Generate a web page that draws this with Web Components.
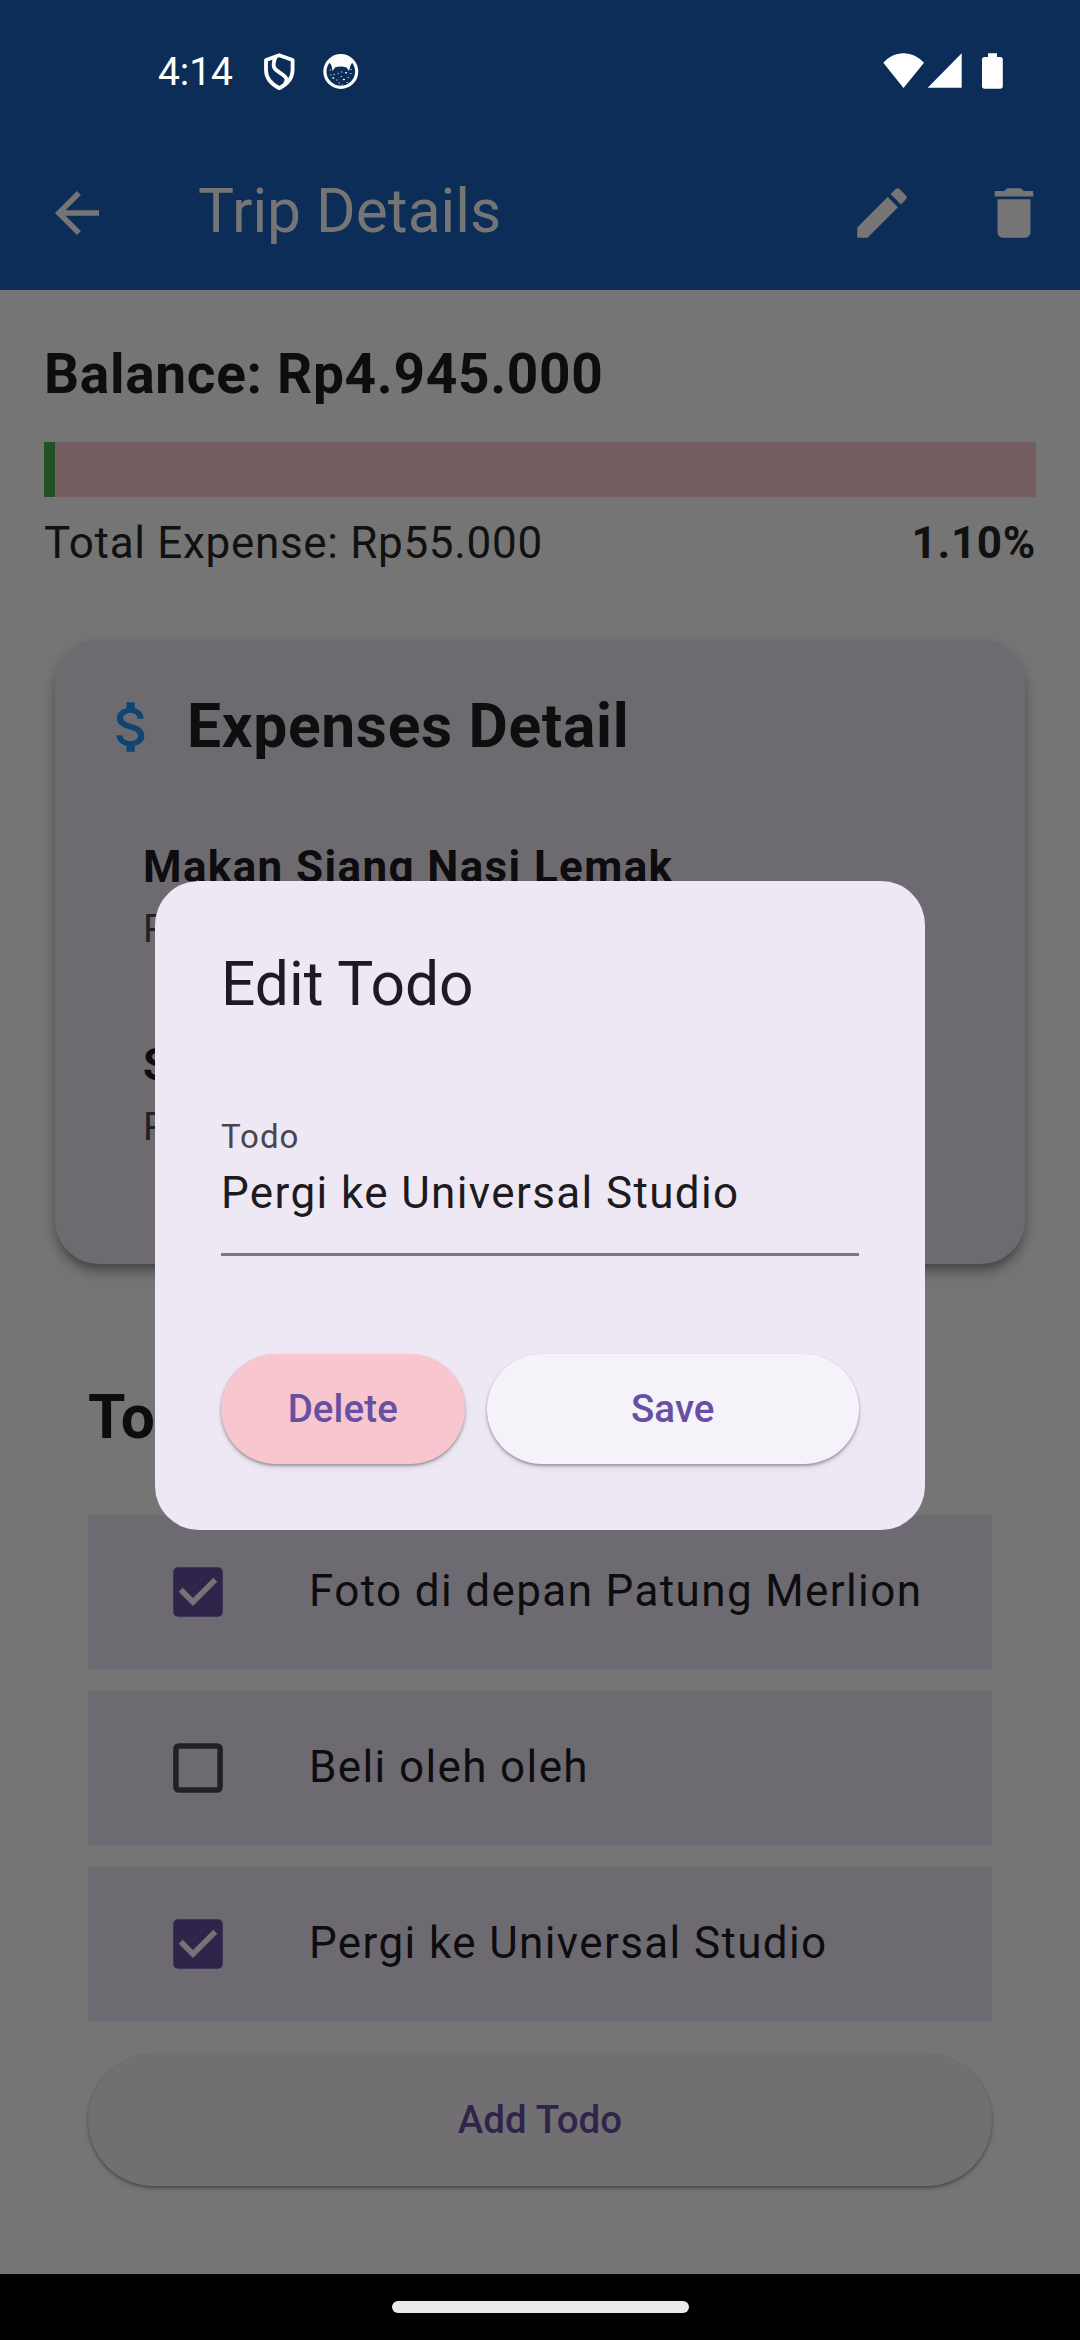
<!DOCTYPE html>
<html lang="id">
<head>
<meta charset="utf-8">
<title>Trip Details</title>
<style>
  html, body { margin: 0; background: #000; }
  body { font-family: Roboto, "Noto Sans", sans-serif; }
</style>
</head>
<body>
<trip-app></trip-app>
<script>
const define = (name, html) => {
  const tpl = document.createElement('template');
  tpl.innerHTML = html;
  customElements.define(name, class extends HTMLElement {
    constructor() {
      super();
      this.attachShadow({ mode: 'open' }).append(tpl.content.cloneNode(true));
    }
  });
};

// Material icons on the 24-unit grid, drawn at 66px.
const ICONS = {
  back: 'M20 11H7.83l5.59-5.59L12 4l-8 8 8 8 1.41-1.41L7.83 13H20v-2z',
  edit: 'M3 17.25V21h3.75L17.81 9.94l-3.75-3.75L3 17.25zM20.71 7.04c.39-.39.39-1.02 0-1.41l-2.34-2.34c-.39-.39-1.02-.39-1.41 0l-1.83 1.83 3.75 3.75 1.83-1.83z',
  delete: 'M6 19c0 1.1.9 2 2 2h8c1.1 0 2-.9 2-2V7H6v12zM19 4h-3.5l-.71-.71c-.18-.18-.44-.29-.7-.29H9.91c-.26 0-.52.11-.7.29L8.5 4H5v2h14V4z',
  money: 'M11.8 10.9c-2.27-.59-3-1.2-3-2.15 0-1.09 1.01-1.85 2.7-1.85 1.78 0 2.44.85 2.5 2.1h2.21c-.07-1.72-1.12-3.3-3.21-3.81V3h-3v2.16c-1.94.42-3.5 1.68-3.5 3.61 0 2.31 1.91 3.46 4.7 4.13 2.5.6 3 1.48 3 2.41 0 .69-.49 1.79-2.7 1.79-2.06 0-2.87-.92-2.98-2.1h-2.2c.12 2.19 1.76 3.42 3.68 3.83V21h3v-2.15c1.95-.37 3.5-1.5 3.5-3.55 0-2.84-2.43-3.81-4.7-4.4z'
};
customElements.define('md-icon', class extends HTMLElement {
  connectedCallback() {
    this.attachShadow({ mode: 'open' }).innerHTML = `
      <style>:host{display:block;width:66px;height:66px;flex:none}svg{display:block;width:100%;height:100%;fill:currentColor}</style>
      <svg viewBox="0 0 24 24"><path d="${ICONS[this.getAttribute('name')]}"/></svg>`;
  }
});

define('status-bar', `
  <style>
    :host { display: flex; align-items: flex-start; height: 136px; box-sizing: border-box; padding: 49px 77px 0 158px; color: #fff; }
    .time { font-size: 39px; line-height: 47px; letter-spacing: -.1px; width: 106px; }
    svg { display: block; flex: none; }
    .gap { flex: 1; }
  </style>
  <span class="time">4:14</span>
  <svg width="31" height="44" viewBox="264 49 31 44" fill="none" stroke="#fff" stroke-width="3.8" stroke-linejoin="round">
    <path d="M279.3 55.2L292.6 60V70C292.6 78.500 287.500 84 279.3 88.200C271.100 84 266 78.500 266 70V60Z"/>
    <path d="M275.600 56.500C270.800 69 275.500 69.500 282.500 74.500C287.500 78 287.500 80.500 284.500 84.500"/>
  </svg>
  <svg style="margin-left:28px" width="36" height="44" viewBox="323 49 36 44">
    <circle cx="340.800" cy="71.500" r="15.900" fill="none" stroke="#fff" stroke-width="3.200"/>
    <path fill="#fff" d="M329 62C334 55 347.500 55 352.500 62L350.500 65.500L349 71L346.500 67.500C343 66.300 338.500 66.300 335 67.500L332.500 71L331.500 65.500Z"/>
    <path stroke="#fff" stroke-width="1.500" stroke-linecap="round" fill="none" d="M333 78h.6M345.800 72.800h.6M343.600 79.400h.6"/>
    <path stroke="#fff" stroke-opacity=".75" stroke-width="1" stroke-linecap="round" fill="none" d="M330 70h.5M338 73.500h.5M341.500 72h.5M336.500 80h.5M339 83h.5M348 77.500h.5M350.500 73.500h.5M347 82.500h.5M330.500 75h.5M341 76.500h.5M342 85h.5M334 74.500h.5M351 69.500h.5"/>
  </svg>
  <span class="gap"></span>
  <svg width="120" height="44" viewBox="883 49 120 44" fill="#fff">
    <path d="M883.300 62.700C888.500 56.800 895.500 53.200 903.500 53.200S918.500 56.800 924 62.700L903.500 88Z"/>
    <path d="M961.700 53.300V87.800H927.700Z"/>
    <path d="M988 53.200H997V57H1000.200Q1002.800 57 1002.800 59.600V86Q1002.800 88.700 1000.200 88.700H984.600Q982 88.700 982 86V59.600Q982 57 984.600 57H988Z"/>
  </svg>`);

define('app-bar', `
  <style>
    :host { display: flex; align-items: center; height: 154px; box-sizing: border-box; padding: 0 33.5px 0 44px; color: #757575; }
    .title { flex: 1; margin: -2px 0 0 88px; font-size: 60.5px; line-height: 70px; }
    .actions { display: flex; gap: 66px; }
  </style>
  <md-icon name="back"></md-icon>
  <div class="title"><slot></slot></div>
  <div class="actions"><md-icon name="edit"></md-icon><md-icon name="delete"></md-icon></div>`);

define('balance-summary', `
  <style>
    :host { display: block; margin: 0 44px; padding-top: 49.2px; color: #0d0c0f; letter-spacing: .6875px; }
    .balance { font-weight: 700; font-size: 55px; line-height: 70px; }
    .bar { height: 55px; margin-top: 33.1px; background: #755e61; }
    .fill { height: 100%; width: 1.1%; background: #235126; }
    .row { display: flex; justify-content: space-between; margin-top: 12.400px; font-size: 44px; line-height: 66px; color: #111; }
    b { font-weight: 700; }
  </style>
  <div class="balance"><slot name="balance"></slot></div>
  <div class="bar"><div class="fill"></div></div>
  <div class="row"><slot name="expense"></slot><b><slot name="percent"></slot></b></div>`);

define('expense-item', `
  <style>
    :host { display: block; margin-left: 88px; }
    .name { font-weight: 700; font-size: 44px; line-height: 60px; letter-spacing: 1.375px; height: 60px; color: #0d0c0f; }
    .amount { margin-top: 6.300px; font-size: 38.5px; line-height: 50px; height: 50px; letter-spacing: .6875px; color: #222025; }
  </style>
  <div class="name"><slot></slot></div>
  <div class="amount"><slot name="amount"></slot></div>`);

define('expenses-card', `
  <style>
    :host { display: block; box-sizing: border-box; height: 624.500px; margin: 64.300px 55px 0; padding-top: 54px; border-radius: 44px; background: #6e6b70;
      box-shadow: 0 8px 10px -3px rgba(0,0,0,.28), 0 3px 14px rgba(0,0,0,.12), 0 11px 14px rgba(0,0,0,.1); }
    header { display: flex; align-items: center; gap: 22px; padding-left: 44px; height: 66px; }
    md-icon { color: #0f4570; }
    h2 { margin: 1px 0 0; font-size: 60.5px; line-height: 66px; letter-spacing: .6875px; color: #0e0e0e; }
    .items { display: flex; flex-direction: column; gap: 81.700px; margin-top: 77.500px; }
  </style>
  <header><md-icon name="money"></md-icon><h2>Expenses Detail</h2></header>
  <div class="items"><slot></slot></div>`);

define('todo-item', `
  <style>
    :host { display: flex; align-items: center; height: 154px; background: #6d6a72; color: #0d0c0f; }
    svg { display: block; flex: none; margin: 0 86px 0 85px; }
    .on, :host([checked]) .off { display: none; }
    :host([checked]) .on { display: inline; }
    .label { font-size: 44px; line-height: 60px; letter-spacing: 1.375px; margin-top: -2px; }
  </style>
  <svg width="50" height="50" viewBox="0 0 50 50">
    <rect class="off" x="2.900" y="2.900" width="44.200" height="44.200" rx="3" fill="none" stroke="#222025" stroke-width="5.500"/>
    <g class="on"><rect x=".2" y=".2" width="49.600" height="49.600" rx="5" fill="#2f254b"/>
    <path d="M7.700 22.700L20 35L42.200 12.800" fill="none" stroke="#757575" stroke-width="5.500"/></g>
  </svg>
  <div class="label"><slot></slot></div>`);

define('pill-button', `
  <style>
    :host { display: flex; align-items: center; justify-content: center; box-sizing: border-box; height: 110px; border-radius: 66px;
      font-weight: 500; font-size: 38.5px; line-height: 46px; letter-spacing: .1px;
      box-shadow: 0 2px 3px rgba(0,0,0,.26), 0 1px 3px rgba(0,0,0,.1), 0 4px 6px rgba(0,0,0,.07); }
  </style>
  <span><slot></slot></span>`);

define('todo-section', `
  <style>
    :host { display: block; margin: 118.500px 88px 0; }
    h2 { margin: 0; font-size: 60.5px; line-height: 70px; height: 70px; letter-spacing: .3px; color: #0d0c0f; }
    .list { display: flex; flex-direction: column; gap: 22px; margin-top: 62px; }
    pill-button { height: 132px; margin-top: 33.300px; background: #716f72; color: #2f254b; }
  </style>
  <h2>Todo</h2>
  <div class="list"><slot></slot></div>
  <pill-button>Add Todo</pill-button>`);

define('edit-dialog', `
  <style>
    :host { position: absolute; left: 155px; top: 880.5px; box-sizing: border-box; width: 770px; height: 649px; padding: 69px 66px 0; border-radius: 44px; background: #eee8f4; color: #1d1b20; }
    h2 { margin: 0; font-weight: 400; font-size: 60.5px; line-height: 70px; height: 70px; }
    .label { margin-top: 97px; font-size: 33px; line-height: 40px; letter-spacing: 1px; color: #49454f; }
    .value { margin-top: 8.300px; padding-bottom: 32.500px; font-size: 44px; line-height: 56px; letter-spacing: 1.375px; border-bottom: 3px solid #7b7681; }
    .actions { display: flex; gap: 22px; margin-top: 98px; color: #6750a4; }
    .del { width: 243.500px; background: #f7c6cf; }
    .save { flex: 1; background: #f6f2f9; }
  </style>
  <h2>Edit Todo</h2>
  <div class="label">Todo</div>
  <div class="value"><slot></slot></div>
  <div class="actions"><pill-button class="del">Delete</pill-button><pill-button class="save">Save</pill-button></div>`);

define('gesture-bar', `
  <style>
    :host { display: flex; justify-content: center; align-items: center; height: 66px; background: #000; }
    i { width: 297px; height: 11.500px; border-radius: 6px; background: #eaeaea; }
  </style><i></i>`);

define('trip-app', `
  <style>
    :host { display: flex; flex-direction: column; position: relative; width: 1080px; height: 2340px; overflow: hidden; }
    .top { height: 290px; background: #0c2d57; }
    main { flex: 1; background: #757575; display: flow-root; min-height: 0; }
  </style>
  <div class="top"><status-bar></status-bar><app-bar>Trip Details</app-bar></div>
  <main>
    <balance-summary>
      <span slot="balance">Balance: Rp4.945.000</span>
      <span slot="expense">Total Expense: Rp55.000</span>
      <span slot="percent">1.10%</span>
    </balance-summary>
    <expenses-card>
      <expense-item>Makan Siang Nasi Lemak<span slot="amount">Rp</span></expense-item>
      <expense-item>S<span slot="amount">Rp</span></expense-item>
    </expenses-card>
    <todo-section>
      <todo-item checked>Foto di depan Patung Merlion</todo-item>
      <todo-item>Beli oleh oleh</todo-item>
      <todo-item checked>Pergi ke Universal Studio</todo-item>
    </todo-section>
  </main>
  <gesture-bar></gesture-bar>
  <edit-dialog>Pergi ke Universal Studio</edit-dialog>`);
</script>
</body>
</html>
